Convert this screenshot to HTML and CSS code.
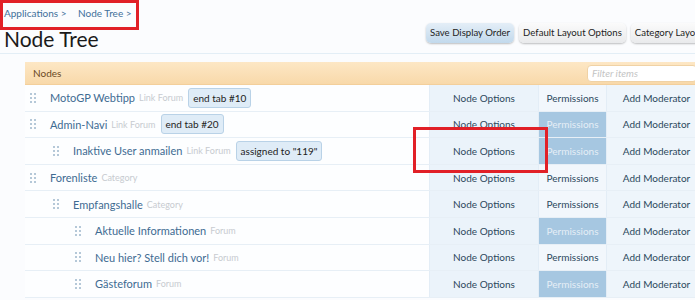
FILE: index.html
```html
<!DOCTYPE html>
<html lang="de">
<head>
    <meta charset="UTF-8">
    <title>Node Tree</title>
    <link rel="stylesheet" href="styles.css">
</head>
<body>
    <div class="page">
        <div class="crumbs">
            <a href="#">Applications &gt;</a>
            <a href="#">Node Tree &gt;</a>
        </div>

        <div class="title-bar">
            <h1>Node Tree</h1>
            <div class="top-buttons">
                <a class="button primary" href="#">Save Display Order</a>
                <a class="button" href="#">Default Layout Options</a>
                <a class="button" href="#">Category Layout Options</a>
            </div>
        </div>

        <div class="node-table">
            <div class="table-head">
                <span>Nodes</span>
                <input class="filter" type="text" placeholder="Filter items">
            </div>

            <div class="row">
                <div class="name lvl1"><i class="handle"></i><a href="#">MotoGP Webtipp</a> <em>Link Forum</em> <b class="tag">end tab #10</b></div>
                <a class="opt" href="#">Node Options</a>
                <a class="perm" href="#">Permissions</a>
                <a class="mod" href="#">Add Moderator</a>
            </div>
            <div class="row">
                <div class="name lvl1"><i class="handle"></i><a href="#">Admin-Navi</a> <em>Link Forum</em> <b class="tag">end tab #20</b></div>
                <a class="opt" href="#">Node Options</a>
                <a class="perm on" href="#">Permissions</a>
                <a class="mod" href="#">Add Moderator</a>
            </div>
            <div class="row">
                <div class="name lvl2"><i class="handle"></i><a href="#">Inaktive User anmailen</a> <em>Link Forum</em> <b class="tag">assigned to "119"</b></div>
                <a class="opt" href="#">Node Options</a>
                <a class="perm on" href="#">Permissions</a>
                <a class="mod" href="#">Add Moderator</a>
            </div>
            <div class="row">
                <div class="name lvl1"><i class="handle"></i><a href="#">Forenliste</a> <em>Category</em></div>
                <a class="opt" href="#">Node Options</a>
                <a class="perm" href="#">Permissions</a>
                <a class="mod" href="#">Add Moderator</a>
            </div>
            <div class="row">
                <div class="name lvl2"><i class="handle"></i><a href="#">Empfangshalle</a> <em>Category</em></div>
                <a class="opt" href="#">Node Options</a>
                <a class="perm" href="#">Permissions</a>
                <a class="mod" href="#">Add Moderator</a>
            </div>
            <div class="row">
                <div class="name lvl3"><i class="handle"></i><a href="#">Aktuelle Informationen</a> <em>Forum</em></div>
                <a class="opt" href="#">Node Options</a>
                <a class="perm on" href="#">Permissions</a>
                <a class="mod" href="#">Add Moderator</a>
            </div>
            <div class="row">
                <div class="name lvl3"><i class="handle"></i><a href="#">Neu hier? Stell dich vor!</a> <em>Forum</em></div>
                <a class="opt" href="#">Node Options</a>
                <a class="perm" href="#">Permissions</a>
                <a class="mod" href="#">Add Moderator</a>
            </div>
            <div class="row">
                <div class="name lvl3"><i class="handle"></i><a href="#">Gästeforum</a> <em>Forum</em></div>
                <a class="opt" href="#">Node Options</a>
                <a class="perm on" href="#">Permissions</a>
                <a class="mod" href="#">Add Moderator</a>
            </div>
        </div>

        <!-- Markierungen aus dem Screenshot -->
        <div class="mark mark-crumbs"></div>
        <div class="mark mark-options"></div>
    </div>
</body>
</html>
```

FILE: styles.css
```css
body {
    margin: 0;
    background: #fbfcfe;
    font-family: 'Lato', 'Liberation Sans', sans-serif;
    font-size: 10px;
    color: #2b485c;
    overflow: hidden;
}

a {
    color: inherit;
    text-decoration: none;
}

.page {
    position: relative;
    width: 695px;
    height: 300px;
    overflow: hidden;
}

/* Breadcrumb */
.crumbs {
    padding: 7px 0 0 4px;
    height: 15px;
    font-size: 10px;
    color: #41709a;
}

.crumbs a {
    margin-right: 9px;
}

/* Titel + Buttons */
.title-bar {
    display: flex;
    align-items: flex-start;
    border-bottom: 1px solid #e3eef6;
    height: 31px;
}

.title-bar h1 {
    flex: none;
    width: 422px;
    margin: 4px 0 0 4px;
    font-size: 21px;
    font-weight: normal;
    color: #1a1a1a;
    line-height: 26px;
}

.top-buttons {
    display: flex;
    gap: 5px;
    margin-top: 1px;
}

.button {
    display: block;
    height: 20px;
    line-height: 20px;
    padding: 0 4px;
    border-radius: 5px;
    background: linear-gradient(#fbfbfb, #e9eaec);
    box-shadow: 0 1px 2px rgba(0, 0, 0, 0.25);
    font-size: 9.6px;
    color: #1e1e1e;
    white-space: nowrap;
}

.button.primary {
    background: linear-gradient(#e4eef7, #c2d9ec);
}

/* Tabelle */
.node-table {
    margin: 8px 0 0 25px;
    width: 675px;
}

.table-head {
    display: flex;
    align-items: center;
    justify-content: space-between;
    height: 22px;
    background: linear-gradient(#fde7c5, #f8d9aa);
    border-bottom: 1px solid #f3cf9b;
    padding-left: 8px;
    color: #6b4a24;
}

.filter {
    width: 110px;
    height: 17px;
    margin-right: 3px;
    padding: 0 4px;
    border: 1px solid #f0d2a5;
    border-radius: 4px;
    font: italic 10px 'Lato', sans-serif;
    box-sizing: border-box;
}

.filter::placeholder {
    color: #c4c4c4;
}

.row {
    display: flex;
    height: 26.6px;
    border-bottom: 1px solid #e7eff6;
    box-sizing: border-box;
    background: #fdfeff;
}

.name {
    flex: none;
    width: 404px;
    display: flex;
    align-items: center;
    white-space: nowrap;
    font-size: 11px;
    box-sizing: border-box;
}

.name a {
    color: #3e6b92;
}

.name em {
    font-style: normal;
    font-size: 9px;
    color: #c7cbd0;
    margin-left: 4px;
}

.lvl1 { padding-left: 5px; }
.lvl2 { padding-left: 28px; }
.lvl3 { padding-left: 50px; }

.handle {
    width: 6px;
    height: 10px;
    margin-right: 14px;
    background-image: radial-gradient(circle, #b5c8d8 1px, transparent 1.2px);
    background-size: 4px 4px;
    background-position: -1px -1px;
}

.tag {
    font-weight: normal;
    font-size: 10px;
    color: #222;
    background: #dfecf7;
    border: 1px solid #b9d2e7;
    border-radius: 3px;
    padding: 3px 4px;
    margin-left: 5px;
}

.opt, .perm, .mod {
    display: flex;
    align-items: center;
    justify-content: center;
    border-left: 1px solid #e3edf6;
    box-sizing: border-box;
}

.opt {
    width: 109px;
    background: #ebf3fa;
}

.perm {
    width: 68px;
    background: #f2f7fc;
}

.perm.on {
    background: #a6c7e1;
    color: #e5eef6;
}

.mod {
    flex: 1;
    padding-left: 6px;
    background: #eef5fb;
}

/* rote Rahmen */
.mark {
    position: absolute;
    border: 3px solid #e12027;
    box-sizing: border-box;
}

.mark-crumbs {
    left: 0;
    top: 0;
    width: 139px;
    height: 30px;
}

.mark-options {
    left: 413px;
    top: 127px;
    width: 135px;
    height: 46px;
}
```
